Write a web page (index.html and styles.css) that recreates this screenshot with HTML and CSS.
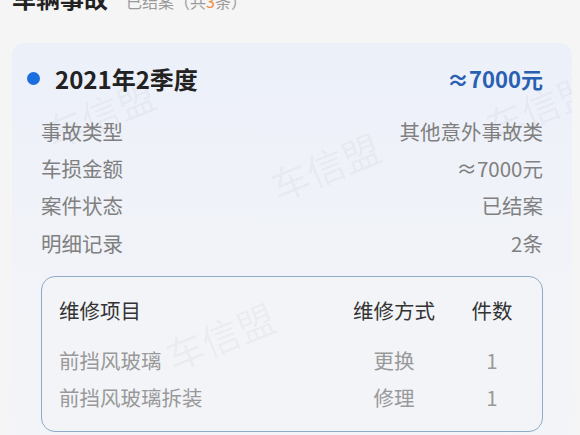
FILE: index.html
```html
<!DOCTYPE html>
<html lang="zh-CN">
<head>
  <meta charset="UTF-8" />
  <title>车辆事故</title>
  <link rel="stylesheet" href="styles.css">
</head>
<body>
  <header class="page-head">
    <h1>车辆事故</h1>
    <span class="head-note">已结案（共<em>3</em>条）</span>
  </header>

  <div class="card">
    <div class="card-head">
      <span class="dot"></span>
      <span class="period">2021年2季度</span>
      <span class="amount">≈7000元</span>
    </div>

    <div class="card-body">
      <div class="info-row"><span>事故类型</span><span>其他意外事故类</span></div>
      <div class="info-row"><span>车损金额</span><span>≈7000元</span></div>
      <div class="info-row"><span>案件状态</span><span>已结案</span></div>
      <div class="info-row"><span>明细记录</span><span>2条</span></div>

      <div class="repair-box">
        <div class="repair-row repair-head">
          <span>维修项目</span><span class="c">维修方式</span><span class="c">件数</span>
        </div>
        <div class="repair-row">
          <span>前挡风玻璃</span><span class="c">更换</span><span class="c">1</span>
        </div>
        <div class="repair-row">
          <span>前挡风玻璃拆装</span><span class="c">修理</span><span class="c">1</span>
        </div>
      </div>
    </div>

    <!-- 水印 -->
    <span class="mark mark-1">车信盟</span>
    <span class="mark mark-2">车信盟</span>
    <span class="mark mark-3">车信盟</span>
    <span class="mark mark-4">车信盟</span>
  </div>
</body>
</html>
```

FILE: styles.css
```css
* {
  box-sizing: border-box;
  margin: 0;
  padding: 0;
}
body {
  font-family: "Noto Sans CJK SC", "Noto Sans", sans-serif;
  background: #f5f5f5;
  min-height: 100vh;
  overflow: hidden;
}
.page-head {
  display: flex;
  align-items: baseline;
  gap: 18px;
  padding: 0 12px;
  margin-top: -18px;
  height: 34px;
}
.page-head h1 {
  font-size: 24px;
  font-weight: 700;
  color: #222;
  line-height: 32px;
}
.head-note {
  font-size: 16px;
  color: #999;
}
.head-note em {
  font-style: normal;
  color: #f08a3c;
}
.card {
  position: relative;
  margin: 27px 8px 0 12px;
  padding: 17px 16px 20px;
  border-radius: 12px;
  background: linear-gradient(180deg, #ecf0f9 0%, #f1f3f8 55%, #f3f5f8 100%);
  overflow: hidden;
}
.card-head {
  display: flex;
  align-items: center;
  height: 36px;
}
.dot {
  width: 13px;
  height: 13px;
  border-radius: 50%;
  background: #1b6ee0;
  margin-left: -1px;
  margin-right: 15px;
}
.period {
  font-size: 24px;
  font-weight: 700;
  color: #222;
}
.amount {
  margin-left: auto;
  margin-right: 13px;
  font-size: 22px;
  font-weight: 700;
  color: #2a60b2;
}
.card-body {
  padding: 16px 13px 0;
}
.info-row {
  display: flex;
  justify-content: space-between;
  align-items: center;
  height: 37.3px;
  font-size: 20.5px;
  color: #808080;
}
.repair-box {
  margin-top: 15px;
  padding: 15px 20px 16px 17px;
  border: 1px solid #8eaac6;
  border-radius: 14px;
  background: #f2f4f8;
}
.repair-row {
  display: grid;
  grid-template-columns: 1fr 100px 60px;
  column-gap: 18px;
  align-items: center;
  height: 37px;
  font-size: 20.5px;
  color: #999;
}
.repair-row .c {
  text-align: center;
}
.repair-head {
  color: #333;
  height: 36px;
  margin-bottom: 13px;
}
.mark {
  position: absolute;
  font-size: 38px;
  font-weight: 400;
  color: rgba(0, 0, 0, 0.045);
  transform: rotate(-22deg);
  white-space: nowrap;
  pointer-events: none;
}
.mark-1 { left: 31px;  top: 42px; }
.mark-2 { left: 256px; top: 95px; }
.mark-3 { left: 471px; top: 35px; }
.mark-4 { left: 151px; top: 265px; }
```
